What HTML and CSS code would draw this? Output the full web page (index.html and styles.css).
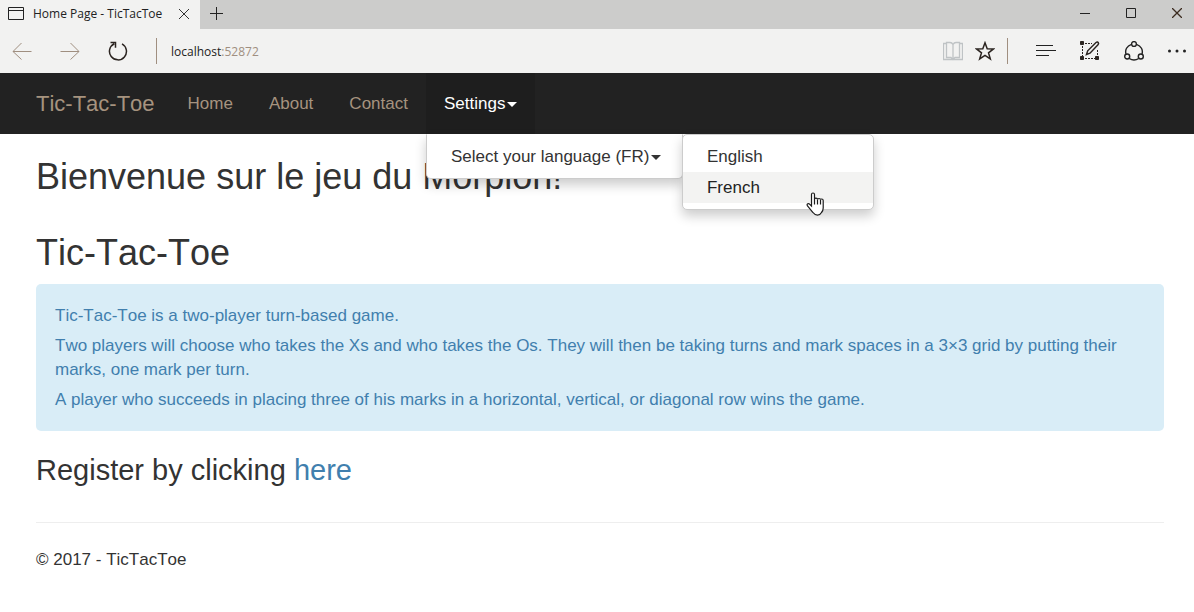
FILE: index.html
```html
<!DOCTYPE html>
<html lang="en">
<head>
<meta charset="utf-8">
<title>Home Page - TicTacToe</title>
<link rel="stylesheet" href="styles.css">
</head>
<body>
<div class="browser">
  <div class="tabstrip">
    <div class="tab">
      <svg class="tab-icon" width="16" height="13" viewBox="0 0 16 13" fill="none" stroke="#222"><path d="M.5.5h15v12H.5zM.5 3.5h15"/></svg>
      <span class="tab-title">Home Page - TicTacToe</span>
      <button class="icon-btn" aria-label="Close tab"><svg width="10" height="10" viewBox="0 0 10 10" stroke="#333"><path d="M0 0l10 10M10 0L0 10"/></svg></button>
    </div>
    <button class="icon-btn new-tab" aria-label="New tab"><svg width="13" height="13" viewBox="0 0 13 13" stroke="#222"><path d="M0 6.500h13M6.500 0v13"/></svg></button>
    <div class="window-buttons">
      <button class="icon-btn" aria-label="Minimize"><svg width="10" height="11" viewBox="0 0 10 11" stroke="#222"><path d="M0 5.500h10"/></svg></button>
      <button class="icon-btn" aria-label="Maximize"><svg width="10" height="10" viewBox="0 0 10 10" fill="none" stroke="#222"><path d="M.5.5h9v9h-9z"/></svg></button>
      <button class="icon-btn" aria-label="Close"><svg width="10" height="10" viewBox="0 0 10 10" stroke="#3c2c20" stroke-width="1.300"><path d="M0 0l10 10M10 0L0 10"/></svg></button>
    </div>
  </div>
  <div class="toolbar">
    <div class="history">
      <button class="icon-btn" aria-label="Back"><svg width="20" height="18" viewBox="0 0 20 18" fill="none" stroke="#a08f80"><path d="M19.500 9.500H1M9.500 1L1 9.500 9.500 17.500"/></svg></button>
      <button class="icon-btn" aria-label="Forward"><svg width="20" height="18" viewBox="0 0 20 18" fill="none" stroke="#a08f80"><path d="M.5 9.500H19M10.500 1L19 9.500 10.500 17.500"/></svg></button>
      <button class="icon-btn" aria-label="Refresh"><svg width="20" height="20" viewBox="0 0 20 20" fill="none" stroke="#2b2420" stroke-width="1.500"><path d="M14 2.900A8.500 8.500 0 1 1 6.300 2.700M2.500 1.500h5v5.200"/></svg></button>
    </div>
    <div class="address" role="textbox" contenteditable="true" spellcheck="false" aria-label="Address">localhost<span class="port">:52872</span></div>
    <div class="page-tools">
      <button class="icon-btn" aria-label="Reading view"><svg width="20" height="20" viewBox="0 0 20 20" fill="none" stroke="#bfc3c5" stroke-width="1.300"><path d="M10 3.500Q9 1.500 7 1.500H3.500v15H8l2 2 2-2h4.500v-15H13Q11 1.500 10 3.500zM10 3.500v15M3.500 2.500h-3v16h19v-16h-3"/></svg></button>
      <button class="icon-btn" aria-label="Add to favorites"><svg width="20" height="20" viewBox="0 0 20 20" fill="none" stroke="#2b2420" stroke-width="1.500"><path d="M10 1.800l2.200 5.900 6.300.2-5 3.900 1.800 6.100-5.300-3.600-5.300 3.600 1.800-6.100-5-3.900 6.300-.2z"/></svg></button>
    </div>
    <div class="hub-tools">
      <button class="icon-btn" aria-label="Hub"><svg width="20" height="14" viewBox="0 0 20 14" stroke="#222" stroke-width="1.200"><path d="M0 1.500h17M0 6.500h20M0 11.500h13"/></svg></button>
      <button class="icon-btn" aria-label="Make a web note"><svg width="20" height="20" viewBox="0 0 20 20" fill="none" stroke="#2b2420"><path d="M5 2.500h7M2.500 5v11M5 17.500h11M17.500 9v7" stroke-dasharray="2 1"/><path d="M.5.500h3v3h-3zM.5 15.500h3v3h-3zM15.500 15.500h3v3h-3z" fill="#2b2420"/><path d="M6.500 13.500l1.200-3.700L16 1.500q1.500-1 2.300.3.700 1-.3 2L10 12.200z" stroke-width="1.500"/></svg></button>
      <button class="icon-btn" aria-label="Share"><svg width="20" height="20" viewBox="0 0 20 20" fill="none" stroke="#222" stroke-width="1.400"><circle cx="10" cy="3" r="2.400"/><circle cx="3.200" cy="15.500" r="2.500"/><circle cx="16.800" cy="15.500" r="2.500"/><path d="M7.500 3.300C2.800 4.800.8 9 2 13M12.500 3.300c4.700 1.500 6.700 5.700 5.500 9.700M5.300 17.500q4.700 3 9.400 0"/></svg></button>
      <button class="icon-btn" aria-label="More"><svg width="18" height="4" viewBox="0 0 18 4" fill="#222"><circle cx="1.500" cy="2" r="1.500"/><circle cx="9" cy="2" r="1.500"/><circle cx="16.500" cy="2" r="1.500"/></svg></button>
    </div>
  </div>
</div>

<nav class="navbar">
  <a class="brand" href="#">Tic-Tac-Toe</a>
  <a class="nav-link" href="#">Home</a>
  <a class="nav-link" href="#">About</a>
  <a class="nav-link" href="#">Contact</a>
  <div class="dropdown">
    <button class="nav-link open" aria-expanded="true">Settings<span class="caret"></span></button>
    <div class="menu">
      <button class="menu-item" aria-expanded="true">Select your language (FR)<span class="caret"></span></button>
      <div class="menu submenu">
        <a class="menu-item" href="#">English</a>
        <a class="menu-item hovered" href="#">French<svg class="pointer" width="19" height="24" viewBox="0 0 19 24" fill="#fff" stroke="#1c1c1c" stroke-width="1.200"><path d="M5.500 14V2.500Q5.500 1 7 1t1.500 1.500V7q0-.8 1.500-.8t1.500 1.300q0-1 1.500-1t1.500 1.300q0-.8 1.300-.8T17.200 8.500V16q0 2.500-1.700 4.500-1.500 2.700-4 2.700t-4.500-2.700L1.500 14q-1-1.500.3-2.200 1-.5 2 .5z"/><path d="M8.500 7v5.500M11.500 7.500v5M14.500 8v4.500"/></svg></a>
      </div>
    </div>
  </div>
</nav>

<main class="container">
  <h2>Bienvenue sur le jeu du Morpion!</h2>
  <h2>Tic-Tac-Toe</h2>
  <div class="alert">
    <p>Tic-Tac-Toe is a two-player turn-based game.</p>
    <p>Two players will choose who takes the Xs and who takes the Os. They will then be taking turns and mark spaces in a 3×3 grid by putting their marks, one mark per turn.</p>
    <p>A player who succeeds in placing three of his marks in a horizontal, vertical, or diagonal row wins the game.</p>
  </div>
  <h3>Register by clicking <a class="link" href="#">here</a></h3>
  <hr>
  <footer>© 2017 - TicTacToe</footer>
</main>
</body>
</html>
```
FILE: styles.css
```css
* { box-sizing: border-box; }
body {
  margin: 0;
  background: #fff;
  color: #333;
  font: 17px/24px "Liberation Sans", Arial, sans-serif;
  font-kerning: none;
}
button { font: inherit; font-kerning: inherit; border: 0; background: none; padding: 0; cursor: pointer; }
a { text-decoration: none; }

.browser { font: 12px/16px "Open Sans", "Noto Sans", sans-serif; color: #222; font-kerning: none; }
.icon-btn { display: flex; align-items: center; justify-content: center; }
.tabstrip { display: flex; height: 29px; background: #cccccb; }
.tab { display: flex; align-items: center; width: 200px; padding: 0 11px 2px 8px; background: #f2f2f1; }
.tab-title { flex: 1; margin-left: 9px; white-space: nowrap; }
.new-tab { padding: 0 10px 2px; }
.window-buttons { display: flex; gap: 36px; margin-left: auto; padding: 0 12px 3px 0; }
.toolbar { display: flex; align-items: center; height: 44px; padding-right: 8px; background: #f2f2f1; }
.history { display: flex; align-items: center; gap: 28px; padding-left: 12px; }
.address { flex: 1; margin-left: 28px; padding: 6px 14px 4px; border-left: 1px solid #a08f80; outline: 0; }
.port { color: #a08f80; }
.page-tools { display: flex; align-items: center; gap: 12px; height: 26px; padding-right: 12px; border-right: 1px solid #a08f80; }
.hub-tools { display: flex; align-items: center; gap: 24px; padding-left: 28px; }

.navbar { display: flex; padding-left: 18px; background: #222; }
.brand, .nav-link { padding: 19px 18px 18px; color: #a6937f; white-space: nowrap; }
.brand { padding-right: 15px; font-size: 22px; }
.dropdown { position: relative; }
.nav-link.open { background: #1e1e1e; color: #fff; }
.caret {
  display: inline-block;
  margin-left: 2px;
  vertical-align: middle;
  border-top: 5px solid;
  border-left: 5px solid transparent;
  border-right: 5px solid transparent;
}
.menu {
  position: absolute;
  top: 100%;
  left: 0;
  width: 257px;
  padding: 6px 0;
  background: #fff;
  border: 1px solid #ccc;
  border-top-color: #fff;
  border-radius: 0 0 5px 5px;
  box-shadow: 0 6px 12px rgba(0, 0, 0, .2);
}
.menu-item {
  display: block;
  position: relative;
  width: 100%;
  padding: 4px 24px 3px;
  color: #333;
  text-align: left;
  white-space: nowrap;
}
.submenu { top: -1px; left: 100%; width: 192px; border-radius: 5px; border-top-color: #ccc; }
.hovered { background: #f3f3f2; color: #222; }
.pointer { position: absolute; left: 123px; top: 20px; }

.container { padding: 23px 30px 32px 36px; }
h2, h3 { margin: 0; font-weight: 400; }
h2 { font-size: 36px; line-height: 40px; }
h2 + h2 { margin-top: 36px; }
h3 { margin-top: 23px; font-size: 29px; line-height: 32px; }
.alert { margin-top: 11px; padding: 20px 19px 19px; border-radius: 5px; background: #d9edf7; color: #417fae; }
.alert p { margin: 0; }
.alert p + p { margin-top: 6px; }
.link { color: #417fae; }
hr { margin: 36px 0 25px; border: 0; border-top: 1px solid #eee; }
```
